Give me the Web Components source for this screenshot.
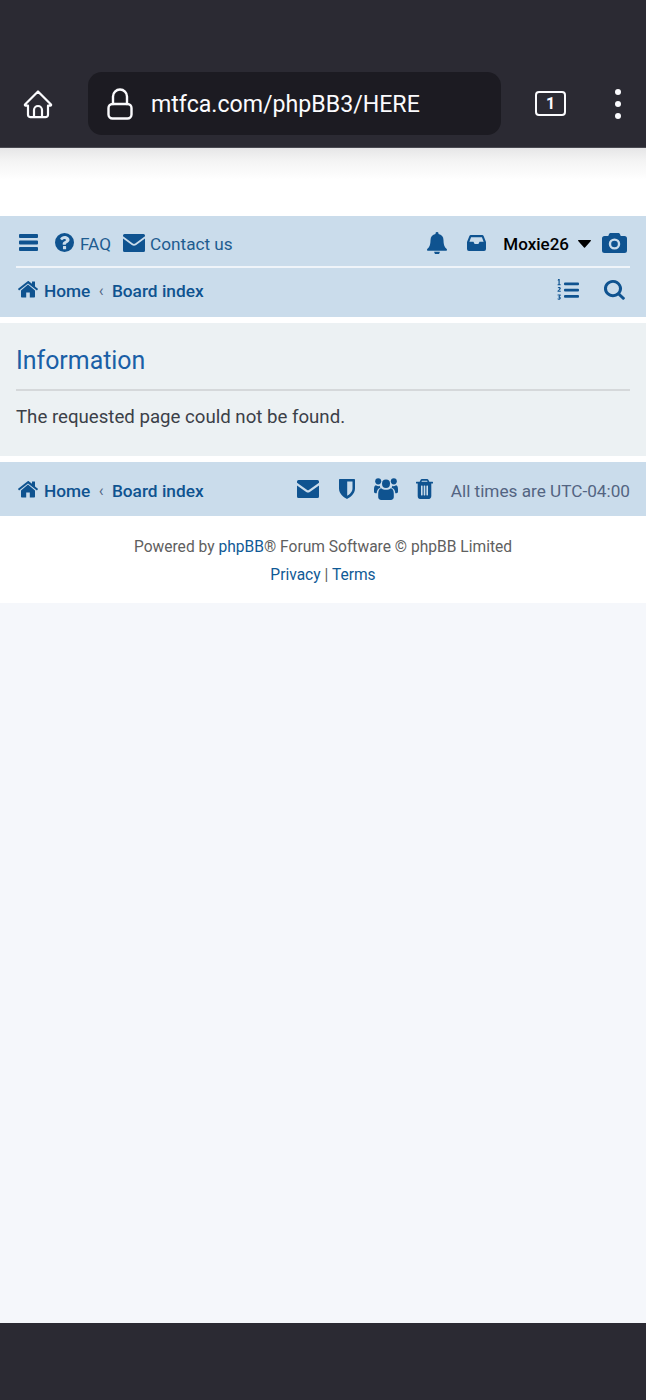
<!DOCTYPE html>
<html>
<head>
<meta charset="utf-8">
<title>Information</title>
<style>
    html, body{ margin: 0; padding: 0; }
    body{ width: 646px; height: 1400px; background: #f5f7fb; font-family: Roboto, sans-serif; display: flex; flex-direction: column; }
    page-main{ flex: 1; }
</style>
</head>
<body>
<browser-bar></browser-bar>
<page-main>
    <nav-header></nav-header>
    <info-panel heading="Information">The requested page could not be found.</info-panel>
    <nav-footer></nav-footer>
    <page-credit></page-credit>
</page-main>
<bottom-bar></bottom-bar>

<script>
const ICONS = {
    bars: ['0 0 20 17', '<path d="M1 0h18a1 1 0 0 1 1 1v2a1 1 0 0 1-1 1H1a1 1 0 0 1-1-1V1a1 1 0 0 1 1-1zM1 6.500h18a1 1 0 0 1 1 1v2a1 1 0 0 1-1 1H1a1 1 0 0 1-1-1v-2a1 1 0 0 1 1-1zM1 13h18a1 1 0 0 1 1 1v2a1 1 0 0 1-1 1H1a1 1 0 0 1-1-1v-2a1 1 0 0 1 1-1z"/>'],
    question: ['0 0 20 20', '<path fill-rule="evenodd" d="M10 0a10 10 0 1 1 0 20 10 10 0 0 1 0-20zM8.400 14.200v2.600a.4.4 0 0 0 .4.4h2.500a.4.4 0 0 0 .4-.4v-2.600a.4.4 0 0 0-.4-.4H8.800a.4.4 0 0 0-.4.4zM10.200 3.200c-2.200 0-3.700 1-4.700 2.500-.1.200-.1.400.1.500l1.700 1.300c.2.100.4.100.6-.1.6-.8 1.100-1.200 2-1.200.8 0 1.600.4 1.600 1.100 0 .7-.6 1-1.400 1.400-1.100.5-2 1.200-2 2.700v.6c0 .2.200.4.400.4h2.500c.2 0 .4-.2.4-.4 0-.8.600-1.100 1.400-1.600 1.100-.6 2.500-1.400 2.500-3.100 0-2.400-2.600-4.100-5.100-4.100z"/>'],
    envelope: ['0 0 22 18', '<path d="M1.500 0h19A1.500 1.500 0 0 1 22 1.500v.8L12.200 9.500a2 2 0 0 1-2.400 0L0 2.300v-.8A1.500 1.500 0 0 1 1.500 0zM0 4.500l8.800 6.500c1.300.9 3.100.9 4.400 0L22 4.500v12a1.500 1.500 0 0 1-1.500 1.500h-19A1.500 1.500 0 0 1 0 16.500z"/>'],
    bell: ['0 0 20 23', '<path d="M10 0a1.500 1.500 0 0 1 1.500 1.500v.7c3 .6 5 3.100 5 6.300 0 6.500 2.200 8 3.200 9.200.3.300.3.600.3.800 0 .6-.4 1.200-1.100 1.200H1.100C.4 19.700 0 19.100 0 18.500c0-.2 0-.5.3-.8 1-1.200 3.200-2.700 3.200-9.200 0-3.200 2-5.700 5-6.300v-.7A1.500 1.500 0 0 1 10 0zM7.200 20.700h5.600a2.800 2.800 0 0 1-5.600 0z"/>'],
    inbox: ['0 0 20 16', '<path fill-rule="evenodd" d="M4 0h12c.6 0 1.200.3 1.500.9L20 7v7a2 2 0 0 1-2 2H2a2 2 0 0 1-2-2V7L2.500.9C2.800.3 3.400 0 4 0zM4.300 2.200L2.500 6.800h4.300l1.200 2.300h4l1.200-2.300h4.300l-1.800-4.600z"/>'],
    camera: ['0 0 24 20', '<path fill-rule="evenodd" d="M8.500 0h7c.8 0 1.500.5 1.800 1.200L18 3h3.500A2.500 2.500 0 0 1 24 5.500v12a2.500 2.500 0 0 1-2.500 2.500h-19A2.500 2.500 0 0 1 0 17.500v-12A2.500 2.500 0 0 1 2.500 3H6l.7-1.800C7 .5 7.700 0 8.500 0zM12 5.500a5.500 5.500 0 1 0 0 11 5.500 5.500 0 0 0 0-11zM12 7.800a3.200 3.200 0 1 1 0 6.400 3.200 3.200 0 0 1 0-6.400z"/>'],
    caret: ['0 0 13 8', '<path d="M.6 0h11.800c.5 0 .8.600.4 1L7 7.600a.7.7 0 0 1-1 0L.2 1C-.2.600.1 0 .6 0z"/>'],
    home: ['0 0 20 17', '<path d="M10 3.600l7 5.800v6.300c0 .4-.3.8-.8.8h-4.400v-5h-3.600v5H3.800c-.5 0-.8-.4-.8-.8V9.400zM10 0c.4 0 .8.100 1.100.400l2.900 2.400V.9c0-.2.200-.4.400-.4h2.200c.2 0 .4.200.4.400v4.500l2.900 2.400c.1.100.1.400 0 .5l-.8 1c-.1.100-.3.100-.5 0L10 2.400 1.400 9.300c-.2.100-.4.100-.5 0l-.8-1c-.1-.1-.1-.4 0-.5z"/>'],
    search: ['0 0 21 21', '<path fill-rule="evenodd" d="M9 0a9 9 0 0 1 7.300 14.200l4.300 4.300a1 1 0 0 1 0 1.400l-.7.700a1 1 0 0 1-1.400 0l-4.300-4.300A9 9 0 1 1 9 0zM9 3a6 6 0 1 0 0 12A6 6 0 0 0 9 3z"/>'],
    mail: ['0 0 22 18', '<path d="M1.500 0h19A1.500 1.500 0 0 1 22 1.500v1.300L11.800 10c-.5.300-1.100.3-1.600 0L0 2.800V1.500A1.500 1.500 0 0 1 1.500 0zM0 5.400l9.200 6.500c1.100.7 2.500.7 3.600 0L22 5.400v11.100a1.500 1.500 0 0 1-1.500 1.500h-19A1.500 1.500 0 0 1 0 16.500z"/>'],
    shield: ['0 0 16 20', '<path fill-rule="evenodd" d="M1 0h14c.6 0 1 .4 1 1v8.500c0 5.500-5 9-8 10.500-3-1.500-8-5-8-10.500V1c0-.6.400-1 1-1zM8.200 2.500v14.300c2-1.200 5.300-3.700 5.300-7.300v-7z"/>'],
    users: ['0 0 24 21', '<circle cx="12" cy="5.500" r="4"/><circle cx="4.200" cy="3.200" r="3"/><circle cx="19.800" cy="3.200" r="3"/><path d="M7.200 9.700c1.200 1 3 1.600 4.800 1.600s3.600-.6 4.800-1.600c2 .2 3 2.600 3 5.300v3.200c0 1.600-1.200 2.800-3 2.800H7.200c-1.800 0-3-1.200-3-2.800V15c0-2.700 1-5.100 3-5.300zM1.800 7c.8.500 1.500.8 2.400.8.600 0 1.100-.1 1.500-.3 0 .8.300 1.300.7 1.800-2.400.5-3.700 2.900-3.700 5.200H1.500C.6 14.500 0 13.900 0 13v-2.200C0 8.800.6 7.400 1.800 7zM22.200 7c1.200.4 1.800 1.800 1.800 3.800V13c0 .9-.6 1.500-1.500 1.500h-1.200c0-2.300-1.300-4.700-3.700-5.200.4-.5.700-1 .7-1.800.4.200.9.300 1.500.3.900 0 1.600-.3 2.400-.8z"/>'],
    trash: ['0 0 17 20', '<path fill-rule="evenodd" d="M6 0h5c.7 0 1.300.4 1.500 1l.8 1.800h3.300c.2 0 .4.200.4.400v1c0 .2-.2.400-.4.400H15.300v12.400c0 1.600-1 3-2.300 3H4c-1.300 0-2.300-1.300-2.300-3V4.600H.4c-.2 0-.4-.2-.4-.4v-1c0-.2.200-.4.400-.4h3.300L4.500 1C4.700.4 5.300 0 6 0zM6 1.800l-.6 1h6.200l-.6-1zM5 7v9c0 .3.200.5.500.5h.6c.3 0 .5-.2.500-.5V7c0-.3-.2-.5-.5-.5h-.6C5.200 6.500 5 6.700 5 7zM7.700 7v9c0 .3.200.5.500.5h.6c.3 0 .5-.2.500-.5V7c0-.3-.2-.5-.5-.5h-.6c-.3 0-.5.200-.5.500zM10.400 7v9c0 .3.200.5.500.5h.6c.3 0 .5-.2.500-.5V7c0-.3-.2-.5-.5-.5h-.6c-.3 0-.5.200-.5.500z"/>'],
    list: ['0 0 22 22', '<rect x="7" y="3.500" width="15" height="2.700" rx="1"/><rect x="7" y="9.700" width="15" height="2.700" rx="1"/><rect x="7" y="16" width="15" height="2.700" rx="1"/><path d="M1.200 0h1.500v5.200h1v1.100H.6V5.200h.9V1.400H.6zM.6 9c.2-.7.800-1.100 1.600-1.100 1 0 1.600.6 1.600 1.400 0 .9-.8 1.500-1.800 2.400h1.800v1.100H.5v-1c1.200-1.100 1.900-1.800 1.900-2.400 0-.3-.2-.5-.4-.5-.3 0-.4.200-.5.400zM.6 15.500h3.100v.9l-1.100 1.300c.7.100 1.200.6 1.200 1.300 0 1.100-.8 1.800-1.900 1.800-.7 0-1.200-.2-1.500-.7l.6-.8c.2.300.5.400.9.400.3 0 .5-.3.500-.6 0-.4-.3-.6-1-.5v-.8l1-1.200H.6z"/>']
}

class FaIcon extends HTMLElement{
    constructor(){
        super()
        this.shadow = this.attachShadow({mode:"open"})
    }

    connectedCallback(){
        let [box, body] = ICONS[this.getAttribute('name')]
        this.shadow.innerHTML = `
        <style>
            :host{ display: inline-flex; flex: none; color: #0f5390; }
            svg{ display: block; width: 100%; height: 100%; fill: currentColor; }
        </style>
        <svg viewBox="${box}" preserveAspectRatio="none">${body}</svg>`
    }
}
customElements.define('fa-icon', FaIcon)

const BROWSER = `
<style>
    :host{ display: block; height: 148px; box-sizing: border-box; background: #2b2a33; border-bottom: 1px solid #4a4a52; position: relative; }
    :host::after{ content: ""; position: absolute; left: 0; right: 0; top: 148px; height: 32px; background: linear-gradient(#e6e6e7, #f4f4f4 40%, #ffffff); }
    #row{ display: flex; align-items: center; height: 63px; padding: 72px 0 0 22px; }
    #home{ width: 32px; height: 32px; flex: none; stroke-width: 2.200; }
    #url{ display: flex; align-items: center; width: 413px; height: 63px; margin-left: 34px; background: #1c1b22; border-radius: 14px; color: #fbfbfe; font: 400 23.150px Roboto, sans-serif; }
    #url span{ padding-top: 2px; }
    #lock{ width: 26px; height: 32px; margin: 0 18px 0 19px; flex: none; }
    #tabs{ display: flex; align-items: center; justify-content: center; box-sizing: border-box; width: 31px; height: 25px; margin-left: 34px; border: 2.200px solid #fbfbfe; border-radius: 4px; color: #fbfbfe; font: 700 16px Roboto, sans-serif; }
    #more{ display: flex; flex-direction: column; gap: 6px; margin-left: 49px; }
    #more i{ display: block; width: 6px; height: 6px; background: #fbfbfe; border-radius: 3px; }
    svg{ fill: none; stroke: #fbfbfe; stroke-width: 2.400; stroke-linejoin: round; stroke-linecap: round; }
</style>
<div id="row">
    <svg id="home" viewBox="0 0 32 32"><path d="M3 16.500L16 3.500l13 13c.4.500 0 1.200-.6 1.200H26v9a2.500 2.500 0 0 1-2.500 2.500h-15A2.500 2.500 0 0 1 6 26.700v-9H3.600c-.6 0-1-.7-.6-1.200z"/><path d="M12 29v-7a4 4 0 0 1 8 0v7"/></svg>
    <div id="url">
        <svg id="lock" viewBox="0 0 26 32"><path d="M6 16V8.500a7 7 0 0 1 14 0V16"/><rect x="1.500" y="16" width="23" height="14.500" rx="4"/></svg>
        <span>mtfca.com/phpBB3/HERE</span>
    </div>
    <div id="tabs">1</div>
    <div id="more"><i></i><i></i><i></i></div>
</div>
`
class BrowserBar extends HTMLElement{
    constructor(){
        super()
        this.attachShadow({mode:"open"}).innerHTML = BROWSER
    }
}
customElements.define('browser-bar', BrowserBar)

const NAV_STYLE = `
<style>
    :host{ display: block; background: #cadceb; color: #0f5390; font: 400 17.200px Roboto, sans-serif; }
    .row{ display: flex; align-items: center; box-sizing: border-box; }
    .push{ margin-left: auto; }
    .crumbs{ display: flex; align-items: center; font-weight: 500; font-size: 17.300px; }
    .crumbs b{ font-weight: 500; }
    .crumbs i{ font-style: normal; font-weight: 400; font-size: 16px; color: #536482; width: 21.500px; text-align: center; }
    .crumbs fa-icon{ margin-right: 6px; margin-bottom: 3px; }
    .up{ margin-bottom: 3px; }
</style>
`

class NavHeader extends HTMLElement{
    constructor(){
        super()
        this.attachShadow({mode:"open"}).innerHTML = NAV_STYLE + `
        <style>
            :host{ height: 101px; padding: 0 16px; }
            #top{ height: 52px; padding-top: 6px; border-bottom: 2px solid #eff4f9; }
            #bottom{ height: 49px; padding-bottom: 4px; }
            .text{ color: #105289; opacity: .92; }
            #user{ font-weight: 500; color: #000; font-size: 17px; }
        </style>
        <div class="row" id="top">
            <fa-icon class="up" name="bars" style="width:19px;height:17px;margin-left:3px"></fa-icon>
            <fa-icon class="up" name="question" style="width:19px;height:19px;margin-left:17px"></fa-icon>
            <span class="text" style="margin-left:6px">FAQ</span>
            <fa-icon class="up" name="envelope" style="width:22px;height:18px;margin-left:12px"></fa-icon>
            <span class="text" style="margin-left:5px">Contact us</span>
            <fa-icon class="push up" name="bell" style="width:20px;height:22px"></fa-icon>
            <fa-icon class="up" name="inbox" style="width:19px;height:16px;margin-left:20px"></fa-icon>
            <span id="user" style="margin-left:17px">Moxie26</span>
            <fa-icon class="up" name="caret" style="width:13px;height:8px;margin-left:9px;color:#000;margin-top:3px"></fa-icon>
            <fa-icon class="up" name="camera" style="width:25px;height:20px;margin-left:11px;margin-right:3px"></fa-icon>
        </div>
        <div class="row" id="bottom">
            <div class="crumbs" style="margin-left:2px">
                <fa-icon name="home" style="width:20px;height:17px"></fa-icon><b>Home</b><i>‹</i><b>Board index</b>
            </div>
            <fa-icon class="push" name="list" style="width:22px;height:22px;margin-bottom:2px"></fa-icon>
            <fa-icon name="search" style="width:21px;height:20px;margin-left:25px;margin-right:5px;margin-bottom:1px"></fa-icon>
        </div>`
    }
}
customElements.define('nav-header', NavHeader)

const PANEL = `
<style>
    :host{ display: block; margin-top: 6px; height: 133px; box-sizing: border-box; padding: 0 16px; background: #ecf1f3; color: #3b4048; font: 400 18.650px Roboto, sans-serif; }
    h2{ margin: 0; height: 68px; box-sizing: border-box; padding-top: 20px; border-bottom: 2px solid #d5d8da; color: #1a5fa6; font: 400 24.900px/36px Roboto, sans-serif; }
    p{ margin: 0; padding-top: 14px; line-height: 24px; }
</style>
<h2></h2>
<p><slot></slot></p>
`
class InfoPanel extends HTMLElement{
    constructor(){
        super()
        this.shadow = this.attachShadow({mode:"open"})
        this.shadow.innerHTML = PANEL
        this.shadow.querySelector('h2').textContent = this.getAttribute('heading')
    }
}
customElements.define('info-panel', InfoPanel)

class NavFooter extends HTMLElement{
    constructor(){
        super()
        this.attachShadow({mode:"open"}).innerHTML = NAV_STYLE + `
        <style>
            :host{ height: 54px; margin-top: 6px; padding: 3px 16px 0; box-sizing: border-box; }
            .row{ height: 100%; }
            #tz{ color: #536482; margin-left: 18px; }
        </style>
        <div class="row">
            <div class="crumbs" style="margin-left:2px">
                <fa-icon name="home" style="width:20px;height:17px"></fa-icon><b>Home</b><i>‹</i><b>Board index</b>
            </div>
            <fa-icon class="push up" name="mail" style="width:22px;height:18px"></fa-icon>
            <fa-icon class="up" name="shield" style="width:16px;height:20px;margin-left:20px"></fa-icon>
            <fa-icon class="up" name="users" style="width:24px;height:22px;margin-left:19px"></fa-icon>
            <fa-icon class="up" name="trash" style="width:17px;height:20px;margin-left:18px"></fa-icon>
            <span id="tz">All times are UTC-04:00</span>
        </div>`
    }
}
customElements.define('nav-footer', NavFooter)

class PageCredit extends HTMLElement{
    constructor(){
        super()
        this.attachShadow({mode:"open"}).innerHTML = `
        <style>
            :host{ display: block; height: 87px; box-sizing: border-box; padding-top: 17px; background: #fff; color: #606060; text-align: center; font: 400 15.580px/28px Roboto, sans-serif; }
            a{ color: #105a96; text-decoration: none; }
        </style>
        <div>Powered by <a>phpBB</a>® Forum Software © phpBB Limited</div>
        <div><a>Privacy</a> | <a>Terms</a></div>`
    }
}
customElements.define('page-credit', PageCredit)

class BottomBar extends HTMLElement{
    constructor(){
        super()
        this.attachShadow({mode:"open"}).innerHTML = `
        <style>
            :host{ display: block; height: 77px; background: #2b2a33; }
        </style>`
    }
}
customElements.define('bottom-bar', BottomBar)

class PageMain extends HTMLElement{
    constructor(){
        super()
        this.attachShadow({mode:"open"}).innerHTML = `
        <style>
            :host{ display: block; }
            #white{ background: #fff; padding-top: 68px; }
        </style>
        <div id="white"><slot></slot></div>`
    }
}
customElements.define('page-main', PageMain)
</script>
</body>
</html>
